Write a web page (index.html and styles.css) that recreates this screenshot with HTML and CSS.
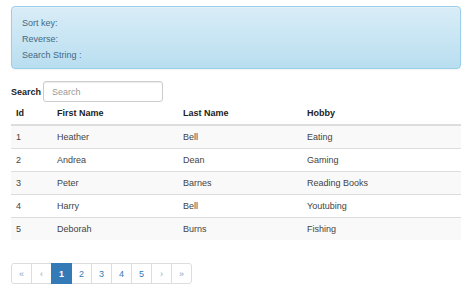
FILE: index.html
```html
<!DOCTYPE html>
<html>
<head>
<meta charset="utf-8">
<link rel="stylesheet" href="styles.css">
</head>
<body>
<div class="page">
  <div class="alert">
    <div>Sort key:</div>
    <div>Reverse:</div>
    <div>Search String :</div>
  </div>
  <div class="search-row">
    <label class="search-label">Search</label>
    <input class="search-input" type="text" placeholder="Search">
  </div>
  <table class="grid">
    <thead>
      <tr><th class="c-id">Id</th><th class="c-first">First Name</th><th class="c-last">Last Name</th><th>Hobby</th></tr>
    </thead>
    <tbody>
      <tr><td>1</td><td>Heather</td><td>Bell</td><td>Eating</td></tr>
      <tr><td>2</td><td>Andrea</td><td>Dean</td><td>Gaming</td></tr>
      <tr><td>3</td><td>Peter</td><td>Barnes</td><td>Reading Books</td></tr>
      <tr><td>4</td><td>Harry</td><td>Bell</td><td>Youtubing</td></tr>
      <tr><td>5</td><td>Deborah</td><td>Burns</td><td>Fishing</td></tr>
    </tbody>
  </table>
  <ul class="pager">
    <li class="arrow">&laquo;</li>
    <li class="arrow">&lsaquo;</li>
    <li class="active">1</li>
    <li>2</li>
    <li>3</li>
    <li>4</li>
    <li>5</li>
    <li class="arrow">&rsaquo;</li>
    <li class="arrow">&raquo;</li>
  </ul>
</div>
</body>
</html>
```
FILE: styles.css
```css
html, body {
  margin: 0;
  padding: 0;
  background: #fff;
}
body {
  font-family: "Liberation Sans", Arial, sans-serif;
  font-size: 9px;
  color: #333;
}
.page {
  padding: 6px 13px 0 11px;
}
.alert {
  box-sizing: border-box;
  height: 63px;
  padding: 8px 10px 0 10px;
  line-height: 16px;
  color: #3f6a85;
  background: linear-gradient(to bottom, #d9edf7 0%, #b9def0 100%);
  border: 1px solid #9acfea;
  border-radius: 4px;
  box-shadow: inset 0 1px 0 rgba(255,255,255,.25), 0 1px 2px rgba(0,0,0,.05);
}
.search-row {
  display: flex;
  align-items: center;
  margin-top: 12px;
  height: 21px;
}
.search-label {
  font-weight: bold;
  color: #222;
  margin-right: 3px;
  width: 29px;
}
.search-input {
  box-sizing: border-box;
  width: 120px;
  height: 21px;
  border: 1px solid #ccc;
  border-radius: 3px;
  padding: 0 8px;
  font-family: "Liberation Sans", Arial, sans-serif;
  font-size: 9px;
  color: #555;
  box-shadow: inset 0 1px 1px rgba(0,0,0,.075);
  outline: none;
}
.search-input::placeholder {
  color: #999;
}
.grid {
  width: 100%;
  border-collapse: collapse;
  margin-top: 0;
}
.grid th, .grid td {
  text-align: left;
  padding: 0 5px;
  height: 22px;
  vertical-align: middle;
}
.grid th {
  font-weight: bold;
  color: #222;
  border-bottom: 2px solid #ddd;
  height: 22px;
}
.grid td {
  border-top: 1px solid #ddd;
  color: #444;
}
.grid tbody tr:nth-child(odd) td {
  background: #f9f9f9;
}
.c-id { width: 31px; }
.c-first { width: 116px; }
.c-last { width: 114px; }
.pager {
  list-style: none;
  margin: 23px 0 0 0;
  padding: 0;
  display: flex;
}
.pager li {
  box-sizing: border-box;
  width: 21px;
  height: 21px;
  display: flex;
  align-items: center;
  justify-content: center;
  border: 1px solid #ddd;
  margin-left: -1px;
  color: #337ab7;
  font-size: 9px;
  background: #fff;
}
.pager li:first-child {
  margin-left: 0;
  border-radius: 3px 0 0 3px;
}
.pager li:last-child {
  border-radius: 0 3px 3px 0;
}
.pager li.arrow {
  color: #8aa9c4;
}
.pager li.active {
  background: #337ab7;
  border-color: #337ab7;
  color: #fff;
  font-weight: bold;
  position: relative;
  z-index: 1;
}
```
